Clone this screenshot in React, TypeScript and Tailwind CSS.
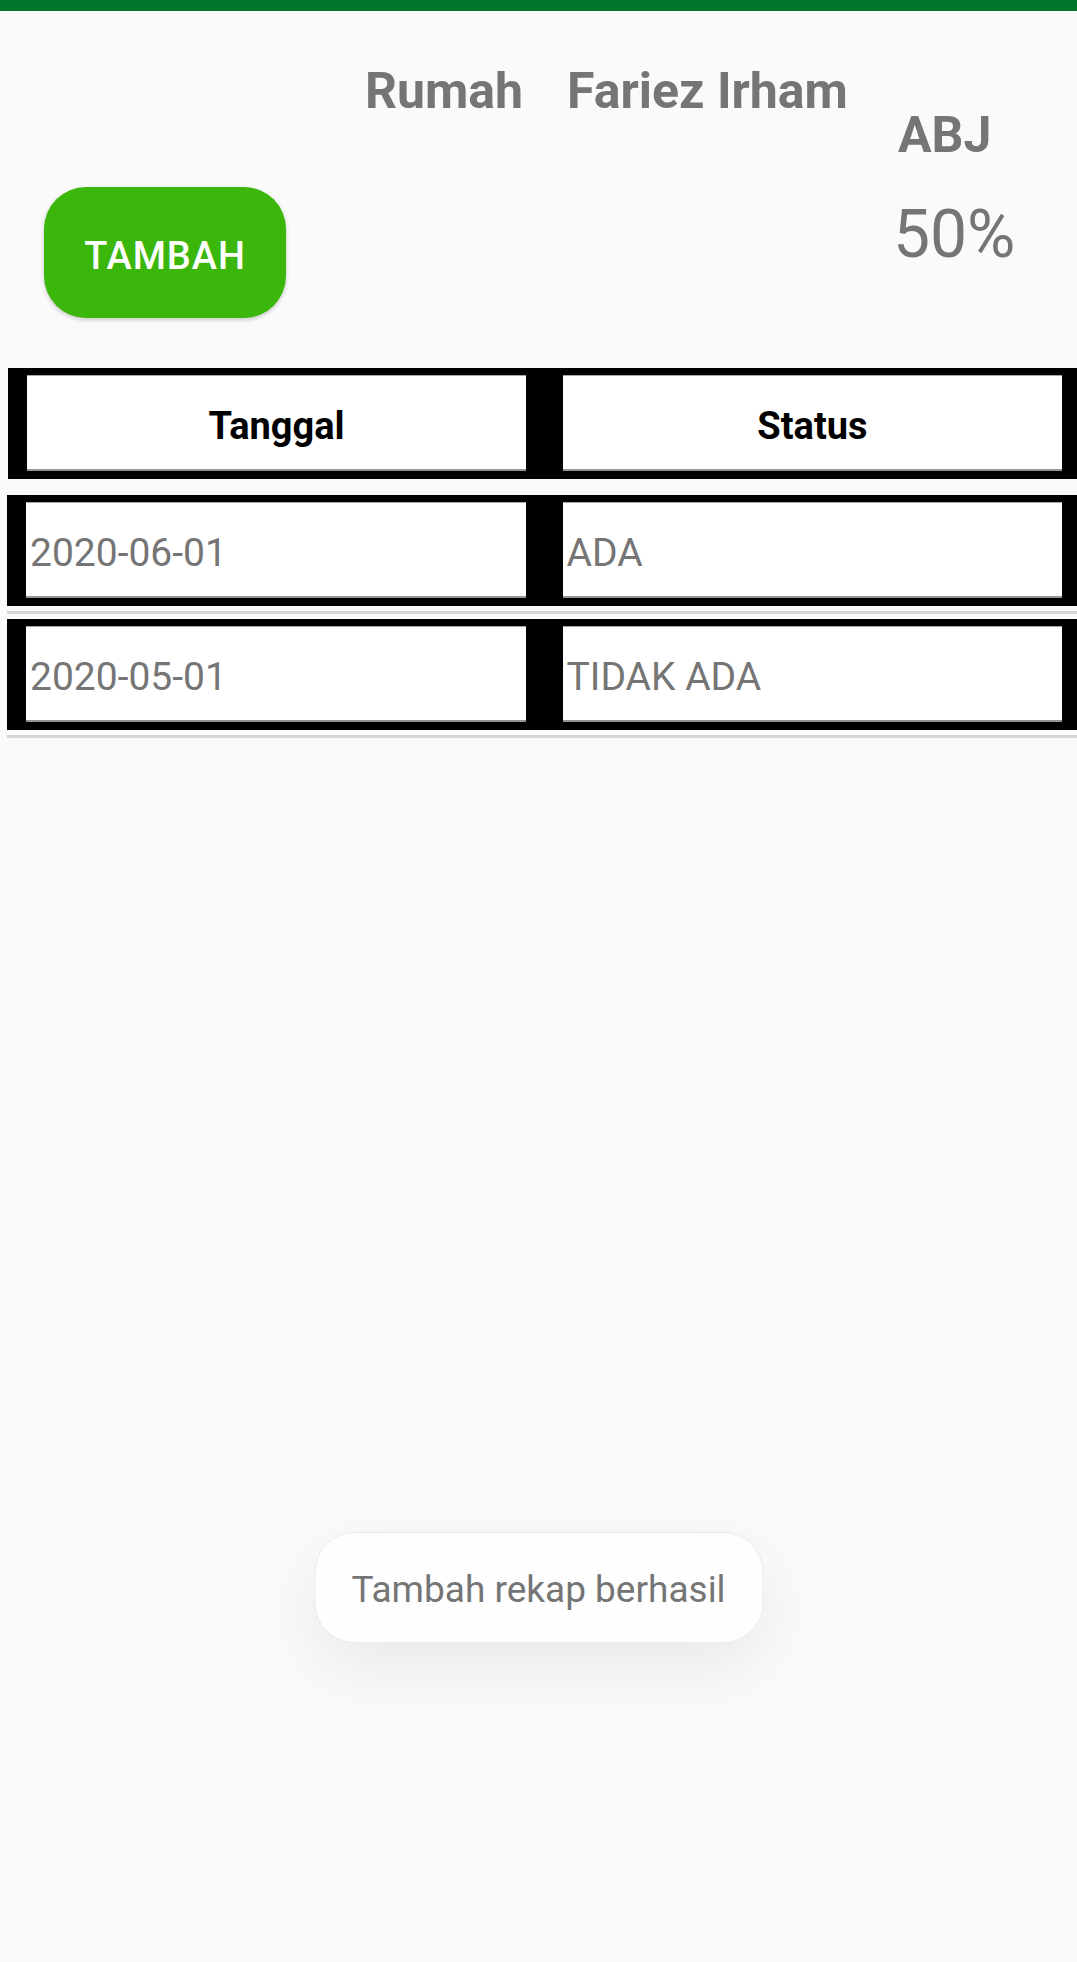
const rows = [
  { tanggal: "2020-06-01", status: "ADA" },
  { tanggal: "2020-05-01", status: "TIDAK ADA" },
];

function Cell({ children, head }: { children: React.ReactNode; head?: boolean }) {
  return (
    <div
      className={
        "flex-1 h-[96px] pt-[7px] bg-white border-t border-t-[#a8a8a8] border-b-2 border-b-[#939393] flex items-center " +
        (head ? "justify-center text-black font-bold text-[38px]" : "pl-1 text-[#757575] text-[39px]")
      }
    >
      {children}
    </div>
  );
}

export default function App() {
  return (
    <div className="relative h-[1962px] w-full bg-[#fafafa] font-['Roboto',sans-serif] overflow-hidden">
      <div className="h-[11px] bg-[#01732d]" />

      {/* header area */}
      <div className="h-[357px] flex items-start">
        <button className="ml-[44px] mt-[176px] w-[242px] h-[131px] pt-[8px] rounded-[42px] bg-[#3bb60a] text-white text-[38px] font-medium tracking-wide shadow-[0_2px_4px_rgba(0,0,0,0.2)]">
          TAMBAH
        </button>
        <div className="ml-[79px] mt-[55px] flex gap-[44px] text-[50px] leading-none font-bold text-[#757575]">
          <span>Rumah</span>
          <span>Fariez Irham</span>
        </div>
        <div className="ml-[50px] mt-[99px] flex flex-col items-start text-[#757575]">
          <span className="text-[50px] leading-none font-bold">ABJ</span>
          <span className="-ml-[5px] mt-[42px] text-[66px] leading-none">50%</span>
        </div>
      </div>

      {/* table */}
      <div className="ml-[8px] bg-black pt-[7px] pb-[8px] pl-[19px] pr-[15px] flex gap-[37px]">
        <Cell head>Tanggal</Cell>
        <Cell head>Status</Cell>
      </div>

      <div className="mt-[16px]">
        {rows.map((r) => (
          <div key={r.tanggal} className="ml-[7px]">
            <div className="bg-black pt-[7px] pb-[8px] pl-[19px] pr-[15px] flex gap-[37px]">
              <Cell>{r.tanggal}</Cell>
              <Cell>{r.status}</Cell>
            </div>
            <div className="my-[5px] h-[3px] bg-[#d7d7d7]" />
          </div>
        ))}
      </div>

      {/* toast */}
      <div className="absolute top-[1532px] left-1/2 -translate-x-1/2 w-[449px] h-[111px] pt-[5px] rounded-[40px] bg-[#fefefe] border border-[#ebebeb] shadow-[0_24px_70px_rgba(0,0,0,0.07)] flex items-center justify-center text-[37px] text-[#757575]">
        Tambah rekap berhasil
      </div>
    </div>
  );
}
